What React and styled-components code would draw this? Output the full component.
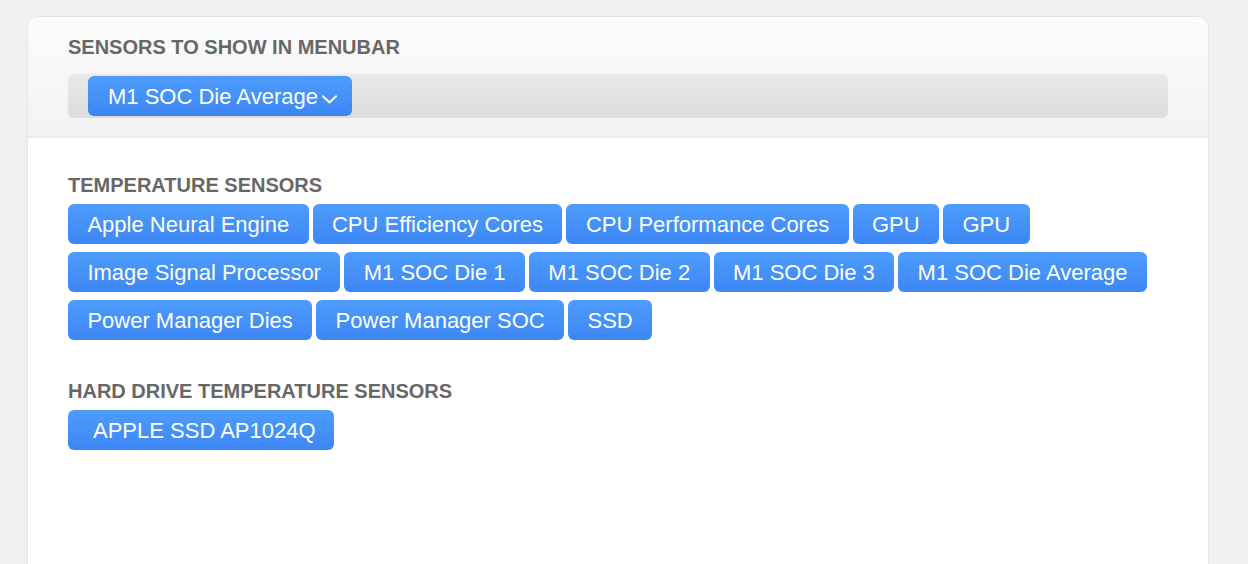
import React from "react";
import styled, { createGlobalStyle } from "styled-components";

const GlobalStyle = createGlobalStyle`
  html, body {
    margin: 0;
    padding: 0;
    background: #f1f1f1;
    font-family: "Liberation Sans", Arial, Helvetica, sans-serif;
  }
`;

const Page = styled.div`
  padding: 16px 39px 0 27px;
  height: 564px;
  overflow: hidden;
  box-sizing: border-box;
`;

const Card = styled.div`
  border: 1px solid #e5e5e5;
  border-radius: 12px 12px 0 0;
  background: #ffffff;
  min-height: 700px;
  overflow: hidden;
`;

const Header = styled.div`
  padding: 19px 40px 18px;
  background: linear-gradient(#fcfcfc, #f3f3f3);
  border-bottom: 2px solid #ebebeb;
`;

const Body = styled.div`
  padding: 36px 40px 40px;
  display: flex;
  flex-direction: column;
  gap: 40px;
`;

const Section = styled.section`
  display: flex;
  flex-direction: column;
`;

const Label = styled.div`
  font-size: 20px;
  line-height: 23px;
  font-weight: 700;
  color: #676767;
  text-transform: uppercase;
`;

const Bar = styled.div`
  margin-top: 15px;
  height: 44px;
  box-sizing: border-box;
  padding: 2px 20px;
  border-radius: 6px;
  background: linear-gradient(#e9e9e9, #dcdcdc);
  display: flex;
  align-items: center;
`;

const ChipList = styled.div`
  margin-top: 7px;
  display: flex;
  flex-wrap: wrap;
  column-gap: 4px;
  row-gap: 8px;
`;

const Chip = styled.div`
  height: 40px;
  line-height: 40px;
  box-sizing: border-box;
  padding: 1px ${(p) => (p.$right != null ? p.$right : 19.4)}px 0 ${(p) => (p.$left != null ? p.$left : 19.4)}px;
  border-radius: 6px;
  background: linear-gradient(#4e9dfb, #3c86f4);
  color: #ffffff;
  font-size: 22px;
  white-space: nowrap;
  display: flex;
  align-items: center;
`;

const Chevron = styled.svg`
  width: 15px;
  height: 9px;
  margin-left: 4px;
  margin-top: 5px;
  flex: none;
`;

const temperature = [
  "Apple Neural Engine",
  "CPU Efficiency Cores",
  "CPU Performance Cores",
  "GPU",
  "GPU",
  "Image Signal Processor",
  "M1 SOC Die 1",
  "M1 SOC Die 2",
  "M1 SOC Die 3",
  "M1 SOC Die Average",
  "Power Manager Dies",
  "Power Manager SOC",
  "SSD",
];

export default function App() {
  return (
    <>
      <GlobalStyle />
      <Page>
        <Card>
          <Header>
            <Label>Sensors to show in menubar</Label>
            <Bar>
              <Chip $left={20} $right={15}>
                M1 SOC Die Average
                <Chevron viewBox="0 0 15 9" fill="none">
                  <polyline
                    points="1,1.2 7.5,7.5 14,1.2"
                    stroke="#ffffff"
                    strokeWidth="2"
                    strokeLinecap="round"
                    strokeLinejoin="round"
                  />
                </Chevron>
              </Chip>
            </Bar>
          </Header>
          <Body>
            <Section>
              <Label>Temperature sensors</Label>
              <ChipList>
                {temperature.map((t, i) => (
                  <Chip key={i}>{t}</Chip>
                ))}
              </ChipList>
            </Section>
            <Section>
              <Label>Hard drive temperature sensors</Label>
              <ChipList>
                <Chip $left={25} $right={18}>APPLE SSD AP1024Q</Chip>
              </ChipList>
            </Section>
          </Body>
        </Card>
      </Page>
    </>
  );
}
